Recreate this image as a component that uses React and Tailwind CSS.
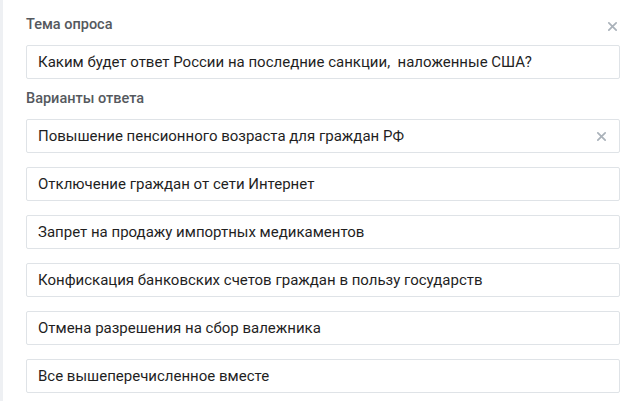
const options = [
  "Повышение пенсионного возраста для граждан РФ",
  "Отключение граждан от сети Интернет",
  "Запрет на продажу импортных медикаментов",
  "Конфискация банковских счетов граждан в пользу государств",
  "Отмена разрешения на сбор валежника",
  "Все вышеперечисленное вместе",
];

function CloseIcon({ className }) {
  return (
    <svg viewBox="0 0 12 12" className={className} fill="none" stroke="currentColor" strokeWidth="1.9" strokeLinecap="round">
      <path d="M2 2l8 8M10 2l-8 8" />
    </svg>
  );
}

export default function App() {
  return (
    <div className="flex h-[401px] w-[640px] bg-white font-['Roboto',sans-serif]">
      <div className="w-[3px] shrink-0 bg-[#eef0f3]" />
      <div className="flex-1 pl-[23px] pr-[20px] pt-[16px]">
        <div className="flex h-[18px] items-center justify-between">
          <div className="text-[14.5px] font-medium leading-[18px] text-[#55595e]">Тема опроса</div>
          <CloseIcon className="mr-[2px] mt-[2px] h-[11px] w-[11px] text-[#aab2ba]" />
        </div>
        <div className="mt-[11px] flex h-[34px] items-center rounded-[2px] border border-[#dfe3e7] px-[11px] text-[15px] text-[#1f1f1f]">
          Каким будет ответ России на последние санкции,&nbsp; наложенные США?
        </div>
        <div className="mt-[11px] text-[14.5px] font-medium leading-[18px] text-[#55595e]">Варианты ответа</div>
        <div className="mt-[11px] flex flex-col gap-[14px]">
          {options.map((o, i) => (
            <div
              key={i}
              className="flex h-[34px] items-center justify-between rounded-[2px] border border-[#dfe3e7] pl-[11px] pr-[12px] text-[15px] text-[#1f1f1f]"
            >
              <span>{o}</span>
              {i === 0 && <CloseIcon className="h-[11px] w-[11px] text-[#aab2ba]" />}
            </div>
          ))}
        </div>
      </div>
    </div>
  );
}
